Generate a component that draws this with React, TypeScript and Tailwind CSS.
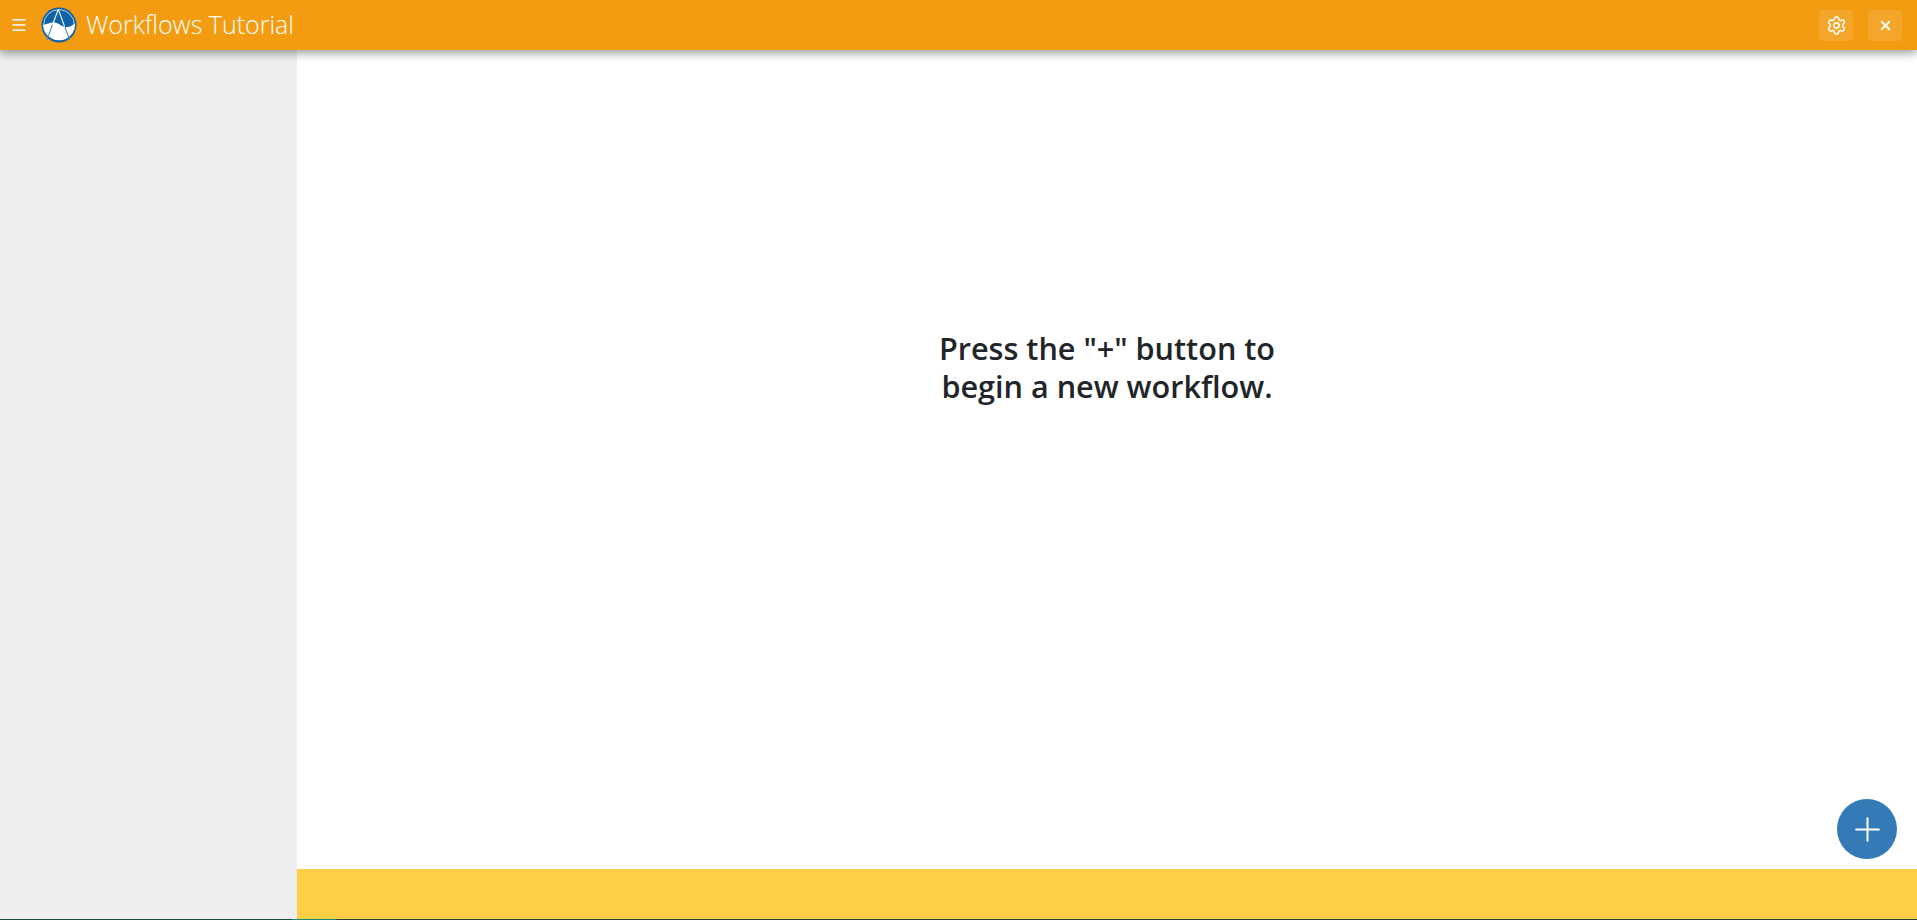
import { Menu, Settings, X, Plus } from "lucide-react";

function Logo() {
  return (
    <svg viewBox="0 0 36 36" className="h-9 w-9 shrink-0">
      <circle cx="18" cy="18" r="17.5" fill="#0f62a8" />
      <path d="M18 2.6 A15.4 15.4 0 0 1 33.4 18" fill="none" stroke="#fff" strokeWidth="0.7" />
      <path d="M18 2.6 A15.4 15.4 0 0 0 2.6 18" fill="none" stroke="#fff" strokeWidth="0.7" />
      <path d="M2 18 C6 17 10 15 14 15.6 C18 16.4 22 20.5 26 20.3 C29 20 31 18 34 16.7 A16 16 0 0 1 2 18 Z" fill="#fff" />
      <path d="M17.3 2.4 L11.8 17 M17.3 2.4 L23.6 19.6" stroke="#fff" strokeWidth="1.1" fill="none" />
      <path d="M11.5 17.6 L5.9 33 M23.8 20.2 L29 33" stroke="#4d8fc4" strokeWidth="1.1" fill="none" />
    </svg>
  );
}

export default function App() {
  return (
    <div className="flex h-[920px] flex-col overflow-hidden bg-white font-['Open_Sans',sans-serif]">
      <header className="relative z-10 flex h-[50px] shrink-0 items-center bg-[#f39c12] pr-[15px] shadow-[0_3px_9px_rgba(0,0,0,0.4)]">
        <Menu className="ml-[10px] text-white" size={18} strokeWidth={2} />
        <div className="ml-[13px]">
          <Logo />
        </div>
        <h1 className="ml-[9px] text-[25px] font-light text-white">Workflows Tutorial</h1>
        <div className="ml-auto flex items-center gap-[15px]">
          <button className="flex h-[31px] w-[34px] items-center justify-center rounded bg-white/10 text-white">
            <Settings size={21} strokeWidth={1.75} />
          </button>
          <button className="flex h-[31px] w-[34px] items-center justify-center rounded bg-white/10 text-white">
            <X size={15} strokeWidth={3} />
          </button>
        </div>
      </header>

      <div className="flex min-h-0 flex-1">
        <aside className="w-[297px] shrink-0 bg-[#eeeeee]" />
        <main className="relative flex flex-1 flex-col">
          <div className="flex flex-1 items-start justify-center pt-[279px]">
            <p className="text-center text-[30.6px] leading-[38px] font-semibold text-[#212529]">
              Press the "+" button to
              <br />
              begin a new workflow.
            </p>
          </div>
          <div className="h-[50px] shrink-0 bg-[#ffce47]" />
          <button className="absolute right-5 bottom-[60px] flex h-[60px] w-[60px] items-center justify-center rounded-full bg-[#337ab7] text-white">
            <Plus size={39} strokeWidth={1.2} />
          </button>
        </main>
      </div>

      <div className="flex h-px shrink-0">
        <div className="w-[292px] bg-[#1f4a44]" />
        <div className="w-[44px] bg-[#1c8a7a]" />
        <div className="flex-1 bg-[#27463a]" />
      </div>
    </div>
  );
}
